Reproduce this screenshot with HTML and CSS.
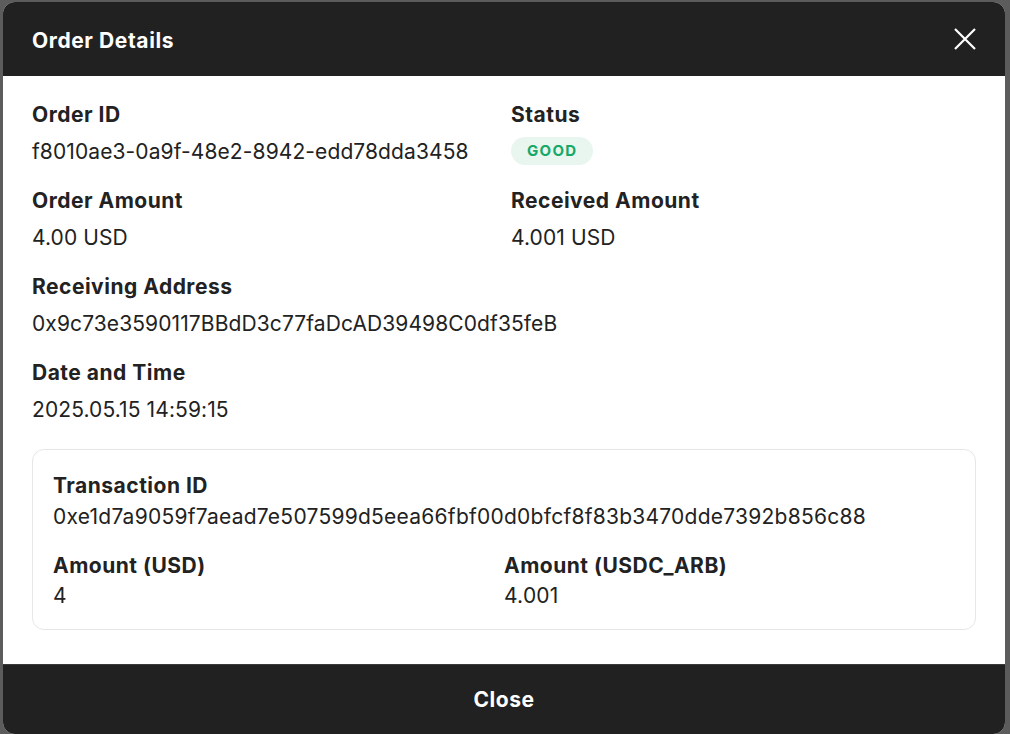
FILE: index.html
```html
<!DOCTYPE html>
<html lang="en">
<head>
  <meta charset="UTF-8">
  <title>Order Details</title>
  <meta name="viewport" content="width=device-width, initial-scale=1">
  <link rel="stylesheet" href="styles.css">
</head>
<body>

  <div class="modal">
    <div class="modal-header">
      <h2>Order Details</h2>
      <button class="close-x" aria-label="Close">
        <svg width="22" height="22" viewBox="0 0 22 22"><path d="M1 1 L21 21 M21 1 L1 21" stroke="#fff" stroke-width="2.2" fill="none"/></svg>
      </button>
    </div>

    <div class="modal-body">
      <div class="grid">
        <div class="field">
          <div class="label">Order ID</div>
          <div class="value">f8010ae3-0a9f-48e2-8942-edd78dda3458</div>
        </div>
        <div class="field">
          <div class="label">Status</div>
          <div class="value"><span class="badge">GOOD</span></div>
        </div>
        <div class="field">
          <div class="label">Order Amount</div>
          <div class="value">4.00 USD</div>
        </div>
        <div class="field">
          <div class="label">Received Amount</div>
          <div class="value">4.001 USD</div>
        </div>
        <div class="field wide">
          <div class="label">Receiving Address</div>
          <div class="value">0x9c73e3590117BBdD3c77faDcAD39498C0df35feB</div>
        </div>
        <div class="field wide">
          <div class="label">Date and Time</div>
          <div class="value">2025.05.15 14:59:15</div>
        </div>
      </div>

      <div class="tx-card">
        <div class="tx-field wide">
          <div class="label">Transaction ID</div>
          <div class="value">0xe1d7a9059f7aead7e507599d5eea66fbf00d0bfcf8f83b3470dde7392b856c88</div>
        </div>
        <div class="tx-field">
          <div class="label">Amount (USD)</div>
          <div class="value">4</div>
        </div>
        <div class="tx-field">
          <div class="label">Amount (USDC_ARB)</div>
          <div class="value">4.001</div>
        </div>
      </div>
    </div>

    <div class="modal-footer">
      <button class="close-btn">Close</button>
    </div>
  </div>

</body>
</html>
```

FILE: styles.css
```css
* { margin: 0; padding: 0; box-sizing: border-box; font-family: 'Inter', 'Lato', sans-serif; }
body {
  height: 100vh;
  background: #5c5c5c;
  overflow: hidden;
  padding: 2px 5px 0 3px;
}
.modal {
  height: 732px;
  background: #fff;
  border-radius: 12px;
  overflow: hidden;
  display: flex;
  flex-direction: column;
}
.modal-header {
  height: 74px;
  background: #212121;
  color: #fff;
  display: flex;
  align-items: center;
  justify-content: space-between;
  padding: 2px 29px 0 29px;
}
.modal-header h2 { font-size: 21px; font-weight: 700; letter-spacing: 0.6px; }
.close-x { background: none; border: none; cursor: pointer; display: flex; margin-top: -2px; }
.modal-body { flex: 1; padding: 24px 29px 0 29px; color: #222; }
.grid {
  display: grid;
  grid-template-columns: 1fr 1fr;
  column-gap: 14px;
}
.field { display: flex; flex-direction: column; gap: 7px; margin-bottom: 19px; }
.field.wide { grid-column: span 2; }
.label { font-size: 21px; font-weight: 700; line-height: 30px; color: #222; letter-spacing: 0.5px; }
.value { font-size: 21px; line-height: 30px; color: #222; display: flex; align-items: center; letter-spacing: 0.1px; }
.badge {
  display: inline-block;
  height: 28px;
  line-height: 28px;
  padding: 0 16px;
  border-radius: 14px;
  background: #e8f6ef;
  color: #16a867;
  font-size: 15px;
  font-weight: 700;
  letter-spacing: 1.3px;
}
.tx-card {
  margin-top: 5px;
  border: 1px solid #e6e6e6;
  border-radius: 12px;
  padding: 22px 20px 19px 20px;
  display: grid;
  grid-template-columns: 1fr 1fr;
  row-gap: 21px;
}
.tx-field { display: flex; flex-direction: column; gap: 3px; }
.tx-field:nth-child(n+2) { gap: 2px; }
.tx-field.wide { grid-column: span 2; }
.tx-field .label, .tx-field .value { line-height: 28px; }
.tx-field .value { letter-spacing: 0.25px; }
.modal-footer {
  height: 70px;
  background: #212121;
  border-top: 1px solid #3a3a3a;
}
.close-btn {
  width: 100%;
  height: 100%;
  background: none;
  border: none;
  color: #fff;
  font-size: 21px;
  font-weight: 700;
  letter-spacing: 0.5px;
  cursor: pointer;
}
```
